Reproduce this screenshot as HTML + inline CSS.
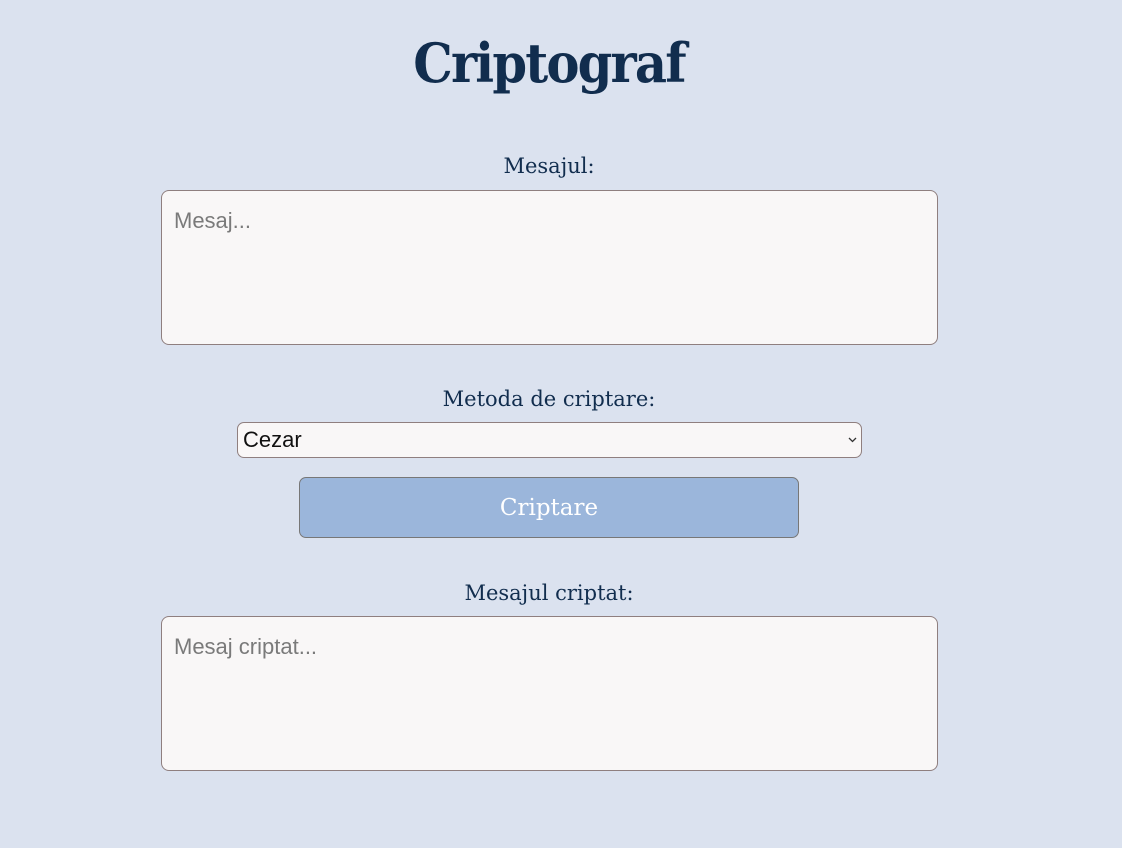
<!DOCTYPE html>
<html><head><style>
html,body{margin:0;padding:0;background:#dbe2ef;width:1122px;height:848px;overflow:hidden;font-family:"DejaVu Serif","Liberation Serif",serif;color:#112d4e}
h1{position:absolute;left:0;width:1098px;text-align:center;top:26px;margin:0;font-size:54px;font-weight:bold;letter-spacing:-2px;line-height:74px;transform:scaleX(0.92)}
.lbl{position:absolute;left:0;width:1098px;text-align:center;font-size:21px;line-height:26px}
.ta{position:absolute;left:161px;width:777px;height:155px;background:#f9f7f7;border:1px solid #8f7f7f;border-radius:8px;box-sizing:border-box}
.ph{position:absolute;left:12px;top:17px;font-size:22px;color:#7a7a7a;font-family:"Liberation Sans",sans-serif;font-weight:300}
.sel{position:absolute;left:237px;top:422px;width:625px;height:36px;background:#f9f7f7;border:1px solid #8f7f7f;border-radius:7px;box-sizing:border-box;font-size:22px;font-family:"Liberation Sans",sans-serif;color:#111;padding-left:5px;line-height:34px}
.sel svg{position:absolute;right:4px;top:14px}
.btn{position:absolute;left:299px;top:477px;width:500px;height:61px;background:#9bb6db;border:1px solid #777;border-radius:7px;box-sizing:border-box;color:#fff;text-align:center;line-height:60px;font-size:23px}
</style></head><body>
<h1>Criptograf</h1>
<div class="lbl" style="top:153px">Mesajul:</div>
<div class="ta" style="top:190px"><div class="ph">Mesaj...</div></div>
<div class="lbl" style="top:386px">Metoda de criptare:</div>
<div class="sel">Cezar<svg width="9" height="6" viewBox="0 0 9 6"><path d="M1 1l3.5 3.5L8 1" fill="none" stroke="#333" stroke-width="1.3"/></svg></div>
<div class="btn">Criptare</div>
<div class="lbl" style="top:580px">Mesajul criptat:</div>
<div class="ta" style="top:616px"><div class="ph">Mesaj criptat...</div></div>
</body></html>
